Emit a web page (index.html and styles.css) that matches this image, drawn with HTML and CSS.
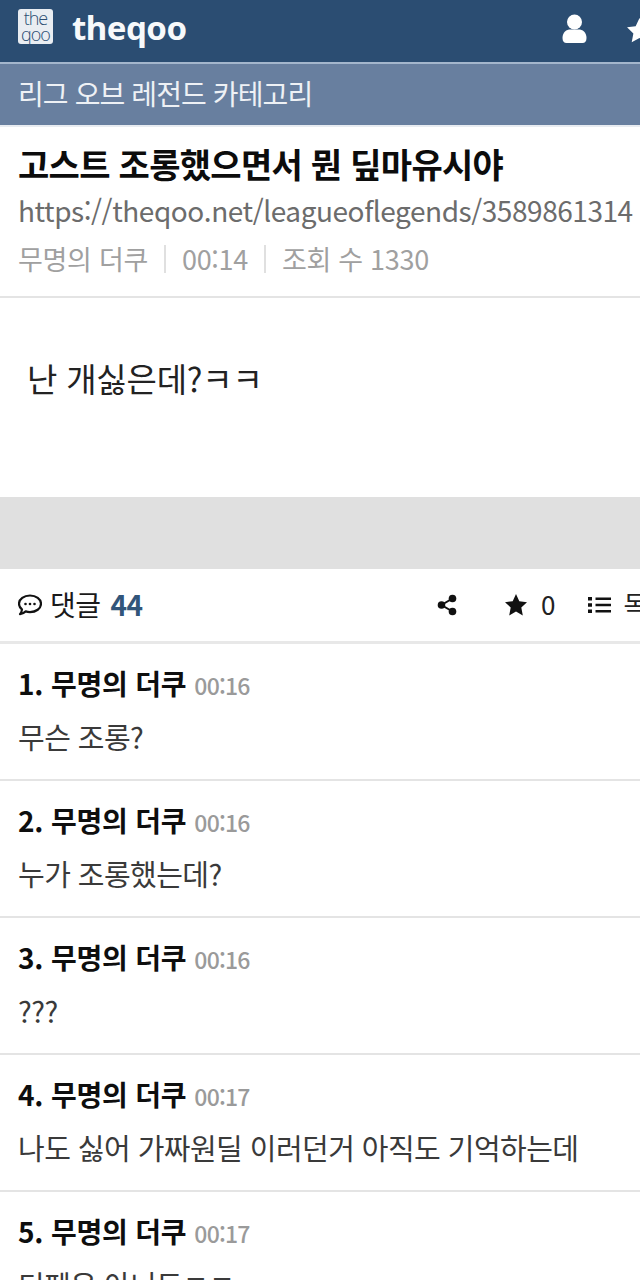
FILE: index.html
```html
<!DOCTYPE html>
<html lang="ko">
<head>
  <meta charset="UTF-8">
  <title>theqoo</title>
  <link rel="stylesheet" href="styles.css">
</head>
<body>
  <div class="page">
    <header class="top-bar">
      <div class="logo-box">the qoo</div>
      <div class="logo-text">theqoo</div>
      <svg class="icon-user" viewBox="0 0 26 30"><circle cx="13" cy="8" r="7.500" fill="#fff"/><path d="M1 24c0-6 4-8.500 8-8.500h8c4 0 8 2.500 8 8.500 0 3.500-1.500 5-4 5H5c-2.500 0-4-1.500-4-5z" fill="#fff"/></svg>
      <svg class="icon-top-star" viewBox="0 0 26 26"><path d="M13 1l3.700 7.800 8.300 1.100-6.100 5.900 1.600 8.500L13 20.200l-7.500 4.100 1.600-8.500L1 9.900l8.300-1.100z" fill="#fff"/></svg>
    </header>
    <div class="category-bar">리그 오브 레전드 카테고리</div>

    <section class="post-head">
      <h1 class="post-title">고스트 조롱했으면서 뭔 딮마유시야</h1>
      <div class="post-url">https://theqoo.net/leagueoflegends/3589861314</div>
      <div class="post-meta">
        <span>무명의 더쿠</span>
        <span class="meta-sep"></span>
        <span>00:14</span>
        <span class="meta-sep"></span>
        <span>조회 수 1330</span>
      </div>
    </section>

    <section class="post-body">난 개싫은데?ㅋㅋ</section>
    <div class="gray-gap"></div>

    <div class="comment-bar">
      <svg class="icon-bubble" viewBox="1 1 24 22"><path d="M13 2.500c6 0 11 3.500 11 8.300s-5 8.300-11 8.300c-1.500 0-3-.2-4.300-.7-1.300 1.200-3.200 2.400-5.700 2.800 1-1.300 1.800-2.700 2-4.700-2-1.500-3-3.500-3-5.700C2 6 7 2.500 13 2.500z" fill="none" stroke="#111" stroke-width="2.200" stroke-linejoin="round"/><circle cx="8.500" cy="11" r="1.300" fill="#111"/><circle cx="13" cy="11" r="1.300" fill="#111"/><circle cx="17.500" cy="11" r="1.300" fill="#111"/></svg>
      <span class="comment-label">댓글</span>
      <span class="comment-count">44</span>
      <div class="comment-tools">
        <svg class="icon-share" viewBox="0 0 20 22"><circle cx="15.500" cy="4.500" r="3.800" fill="#111"/><circle cx="4.500" cy="11" r="3.800" fill="#111"/><circle cx="15.500" cy="17.500" r="3.800" fill="#111"/><path d="M15.500 4.500L4.500 11l11 6.500" fill="none" stroke="#111" stroke-width="2"/></svg>
        <svg class="icon-star" viewBox="0 0 24 24"><path d="M12 1l3.300 7.300 7.700.9-5.700 5.300 1.500 7.900L12 18.500l-6.800 3.900 1.500-7.900L1 9.200l7.700-.9z" fill="#111"/></svg>
        <span class="star-count">0</span>
        <svg class="icon-list" viewBox="0 0 23 18"><path d="M0 1h4v3.500H0zM0 7.200h4v3.500H0zM0 13.500h4V17H0zM7.500 1.500H23v2.500H7.500zM7.500 7.700H23v2.500H7.500zM7.500 14H23v2.500H7.500z" fill="#111"/></svg>
        <span class="list-label">목록</span>
      </div>
    </div>

    <ul class="comment-list">
      <li class="comment">
        <div class="comment-head"><b>1. 무명의 더쿠</b><span class="comment-time">00:16</span></div>
        <div class="comment-text">무슨 조롱?</div>
      </li>
      <li class="comment">
        <div class="comment-head"><b>2. 무명의 더쿠</b><span class="comment-time">00:16</span></div>
        <div class="comment-text">누가 조롱했는데?</div>
      </li>
      <li class="comment">
        <div class="comment-head"><b>3. 무명의 더쿠</b><span class="comment-time">00:16</span></div>
        <div class="comment-text">???</div>
      </li>
      <li class="comment">
        <div class="comment-head"><b>4. 무명의 더쿠</b><span class="comment-time">00:17</span></div>
        <div class="comment-text">나도 싫어 가짜원딜 이러던거 아직도 기억하는데</div>
      </li>
      <li class="comment">
        <div class="comment-head"><b>5. 무명의 더쿠</b><span class="comment-time">00:17</span></div>
        <div class="comment-text">디펜은 아니도ㅋㅋ</div>
      </li>
    </ul>
  </div>
</body>
</html>
```

FILE: styles.css
```css
html, body {
  margin: 0;
  padding: 0;
  background-color: #fff;
  font-family: "Noto Sans CJK KR", "Noto Sans", sans-serif;
  color: #111;
}
.page {
  width: 640px;
  height: 1280px;
  overflow: hidden;
}
.top-bar {
  display: flex;
  align-items: center;
  box-sizing: border-box;
  height: 64px;
  padding: 0 0 9px 18px;
  background-color: #2b4d72;
  border-bottom: 2px solid #a4b6cc;
  position: relative;
}
.logo-box {
  box-sizing: border-box;
  width: 35px;
  height: 35px;
  padding-top: 1px;
  background-color: #e9edf2;
  border-radius: 3px;
  color: #2b4d72;
  font-family: "Open Sans", sans-serif;
  font-size: 18px;
  font-weight: 300;
  line-height: 16px;
  letter-spacing: -1px;
  text-align: center;
}
.logo-text {
  margin: 2px 0 0 19px;
  font-family: "Noto Sans", sans-serif;
  font-size: 33px;
  font-weight: 700;
  color: #f7f9fb;
  letter-spacing: -0.5px;
}
.icon-user {
  position: absolute;
  left: 561px;
  top: 14px;
  width: 27px;
  height: 30px;
}
.icon-top-star {
  position: absolute;
  left: 626px;
  top: 17px;
  width: 27px;
  height: 27px;
}
.category-bar {
  box-sizing: border-box;
  height: 63px;
  padding: 10px 0 0 18px;
  background-color: #687f9f;
  border-bottom: 2px solid #e8ecf1;
  color: #eef1f5;
  font-size: 28px;
  line-height: 38px;
  letter-spacing: -0.9px;
}
.post-head {
  box-sizing: border-box;
  height: 171px;
  padding: 17px 0 0 18px;
  border-bottom: 2px solid #e4e4e4;
  white-space: nowrap;
}
.post-title {
  margin: 0;
  font-size: 34px;
  line-height: 40px;
  font-weight: 700;
  letter-spacing: -0.7px;
  color: #0c0c0c;
}
.post-url {
  margin-top: 6px;
  font-size: 28px;
  line-height: 40px;
  color: #6c6c6c;
  letter-spacing: -0.45px;
}
.post-meta {
  display: flex;
  align-items: center;
  gap: 16px;
  margin-top: 9px;
  font-size: 27px;
  line-height: 40px;
  color: #a0a0a0;
  letter-spacing: -0.3px;
}
.meta-sep {
  width: 2px;
  height: 28px;
  background-color: #e0e0e0;
}
.post-body {
  box-sizing: border-box;
  height: 199px;
  padding: 58px 0 0 27px;
  font-size: 33px;
  line-height: 44px;
  color: #222;
  letter-spacing: -0.2px;
}
.gray-gap {
  height: 72px;
  background-color: #e0e0e0;
}
.comment-bar {
  display: flex;
  align-items: center;
  box-sizing: border-box;
  height: 75px;
  padding: 0 0 2px 18px;
  border-bottom: 3px solid #e8e8e8;
  position: relative;
}
.icon-bubble {
  width: 24px;
  height: 22px;
  margin-top: 2px;
}
.comment-label {
  margin-left: 8px;
  font-size: 28px;
  color: #1a1a1a;
  letter-spacing: -0.5px;
}
.comment-count {
  margin-left: 10px;
  font-size: 28px;
  font-weight: 700;
  color: #32557a;
  letter-spacing: -0.5px;
}
.comment-tools {
  position: absolute;
  left: 437px;
  top: 0;
  bottom: 0;
  display: flex;
  align-items: center;
  white-space: nowrap;
}
.icon-share {
  width: 20px;
  height: 22px;
}
.icon-star {
  width: 24px;
  height: 24px;
  margin-left: 47px;
}
.star-count {
  margin: -4px 0 0 13px;
  font-size: 26px;
  color: #222;
}
.icon-list {
  width: 23px;
  height: 18px;
  margin-left: 33px;
}
.list-label {
  margin: -4px 0 0 12px;
  font-size: 26px;
  color: #222;
}
.comment-list {
  list-style: none;
  margin: 0;
  padding: 0;
}
.comment {
  box-sizing: border-box;
  height: 137px;
  padding: 19px 0 0 18px;
  border-bottom: 2px solid #e4e4e4;
  white-space: nowrap;
}
.comment-head {
  display: flex;
  align-items: center;
  height: 40px;
}
.comment-head b {
  font-size: 28px;
  font-weight: 700;
  color: #0e0e0e;
  letter-spacing: -0.2px;
}
.comment-time {
  margin-left: 8px;
  margin-top: 4px;
  font-size: 23px;
  font-weight: 500;
  color: #9a9a9a;
  letter-spacing: -0.8px;
}
.comment-text {
  margin-top: 14px;
  font-size: 29px;
  line-height: 38px;
  color: #3a3a3a;
  letter-spacing: -0.55px;
}
```
